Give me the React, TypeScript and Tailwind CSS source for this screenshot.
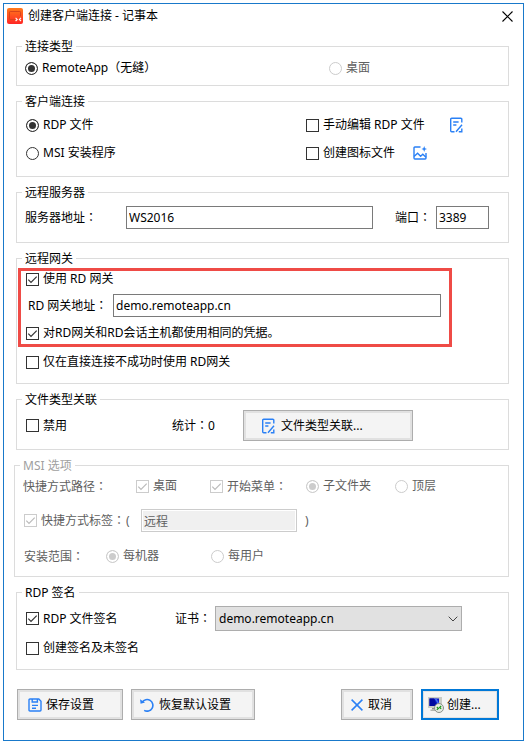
import React from 'react';

const Colon = () => (
  <span className="font-['Noto_Sans_CJK_JP',sans-serif]">：</span>
);

const Group = ({
  title,
  className = '',
  muted = false,
  children
}: {
  title: string;
  className?: string;
  muted?: boolean;
  children: React.ReactNode;
}) => (
  <fieldset className={`min-w-0 border border-[#dcdcdc] ${className}`}>
    <legend className={`ml-[5px] h-[17px] px-[3px] leading-[17px] ${muted ? 'text-[#a0a0a0]' : ''}`}>{title}</legend>
    {children}
  </fieldset>
);

type ToggleProps = {
  label: React.ReactNode;
  name?: string;
  checked?: boolean;
  disabled?: boolean;
  className?: string;
};

const Radio = ({ label, name, checked, disabled, className = '' }: ToggleProps) => (
  <label className={`flex shrink-0 items-center gap-1 ${disabled ? 'text-[#606060]' : ''} ${className}`}>
    <input
      type="radio"
      name={name}
      defaultChecked={checked}
      disabled={disabled}
      className="size-[13px] shrink-0 appearance-none rounded-full border border-[#333] bg-white shadow-[inset_0_0_0_2px_white] checked:bg-[#333] disabled:border-[#ccc] disabled:checked:bg-[#ccc]"
    />
    <span>{label}</span>
  </label>
);

const Check = ({ label, checked, disabled, className = '' }: ToggleProps) => (
  <label className={`flex shrink-0 items-center gap-1 ${disabled ? 'text-[#606060]' : ''} ${className}`}>
    <span className="relative size-[13px] shrink-0">
      <input
        type="checkbox"
        defaultChecked={checked}
        disabled={disabled}
        className="peer block size-[13px] appearance-none border border-[#333] bg-white disabled:border-[#ccc]"
      />
      <svg
        viewBox="0 0 13 13"
        className={`pointer-events-none absolute inset-0 hidden size-[13px] peer-checked:block ${disabled ? 'text-[#bbb]' : 'text-[#333]'}`}
        fill="none"
        stroke="currentColor"
        strokeWidth="1.2"
      >
        <path d="M2.3 6.6 5 9.3 10.7 3.6" />
      </svg>
    </span>
    <span>{label}</span>
  </label>
);

const EditIcon = () => (
  <svg viewBox="0 0 14 16" className="h-4 w-3.5 shrink-0" fill="none" stroke="#2a80f5" strokeWidth="1.4">
    <path d="M11.8 5.5V2.2Q11.8 1.2 10.8 1.2H1.7Q.7 1.2 .7 2.2V13.8Q.7 14.8 1.7 14.8H4.5" />
    <path d="M3.2 5H8.6M3.2 8H6.4" />
    <path d="M12 7.8 6 14.8M8.8 14.8H11.8V11.6" />
  </svg>
);

const PictureIcon = () => (
  <svg viewBox="0 0 14 14" className="size-3.5 shrink-0" fill="none" stroke="#2a80f5" strokeWidth="1.4">
    <path d="M7.5 1H1.9Q1 1 1 1.9V12.1Q1 13 1.9 13H12.1Q13 13 13 12.1V7" />
    <path d="M1 10.6 4.6 7.2 7.6 10.2 9.8 8.2 13 11.2" />
    <path d="M11.2 0 12 2.2 14 3 12 3.8 11.2 6 10.4 3.8 8.4 3 10.4 2.2Z" fill="#2a80f5" stroke="none" />
  </svg>
);

const SaveIcon = () => (
  <svg viewBox="0 0 14 14" className="size-3.5 shrink-0" fill="none" stroke="#2a80f5" strokeWidth="1.4">
    <path d="M2 1H10.8L13 3.2V12Q13 13 12 13H2Q1 13 1 12V2Q1 1 2 1Z" />
    <path d="M4.2 1V4H9.4V1M4 7.4H10M4 10.2H8" />
  </svg>
);

const UndoIcon = () => (
  <svg viewBox="0 0 14 14" className="size-3.5 shrink-0" fill="none" stroke="#2a80f5" strokeWidth="1.6">
    <path d="M2.2 4.2A5.8 5.8 0 1 1 4.2 12.4" />
    <path d="M0 1.2 0.6 5.8 5 4.6Z" fill="#2a80f5" stroke="none" />
  </svg>
);

const CancelIcon = () => (
  <svg viewBox="0 0 12 12" className="size-3 shrink-0" fill="none" stroke="#2a80f5" strokeWidth="1.5">
    <path d="M.6.6 11.4 11.4M11.4.6.6 11.4" />
  </svg>
);

const RemoteIcon = () => (
  <svg viewBox="0 0 16 16" className="size-4 shrink-0">
    <path d="M0 0H14V11H0Z" fill="#c9ccc4" />
    <path d="M1.5 1.5H11V9H1.5Z" fill="#0a18c8" />
    <path d="M1.5 1.5H6L9 9H1.5Z" fill="#0008a0" />
    <path d="M6.5 1.5H8.5L11 6V9Z" fill="#3f6cf0" />
    <path d="M4 11H8V12.5H4Z" fill="#8d8f8a" />
    <path d="M2.5 12.5H9V14H2.5Z" fill="#b4b6b0" />
    <circle cx="11" cy="11" r="4.5" fill="#e6eae4" stroke="#8a8f88" />
    <path d="M8.8 10 10.4 11.4 8.8 12.8M13.2 9 11.6 10.4 13.2 11.8" fill="none" stroke="#1a9a1a" strokeWidth="1.2" />
  </svg>
);

const AppIcon = () => (
  <svg viewBox="0 0 16 16" className="size-4 shrink-0">
    <defs>
      <linearGradient id="appIconFill" x1="0" y1="0" x2="0" y2="1">
        <stop offset="0" stopColor="#ff7a1a" />
        <stop offset="1" stopColor="#ff2626" />
      </linearGradient>
    </defs>
    <rect width="16" height="16" rx="2" fill="url(#appIconFill)" />
    <path d="M8 11.5H3.2Q2.5 11.5 2.5 10.8V4.2Q2.5 3.5 3.2 3.5H12.8Q13.5 3.5 13.5 4.2V8" fill="none" stroke="#d8441c" />
    <path d="M8.6 9.8 10.2 11.4 8.6 13M14 9.8 12.4 11.4 14 13" fill="none" stroke="#fff" strokeWidth="1.1" />
  </svg>
);

const Button = ({ className = '', children }: { className?: string; children: React.ReactNode }) => (
  <button
    type="button"
    className={`flex h-[31px] shrink-0 items-center border border-[#adadad] bg-[#f4f4f4] text-left shadow-[inset_0_0_0_2px_#e1e1e1] ${className}`}
  >
    {children}
  </button>
);

const inputStyle = 'h-[23px] min-w-0 border border-[#7a7a7a] bg-white px-[2px]';

export default function App() {
  return (
    <div className="bg-white pt-[3px] pr-px pb-[2px] pl-[3px] font-['Noto_Sans','Noto_Sans_CJK_SC',sans-serif] text-xs leading-4 whitespace-nowrap text-black">
      <form className="border border-[#1979ca] pb-5">
        <header className="mb-2.5 flex h-6 items-center pr-[10px] pl-[3px]">
          <AppIcon />
          <h1 className="ml-[5px] flex-1">创建客户端连接 - 记事本</h1>
          <button type="button" aria-label="关闭">
            <svg viewBox="0 0 11 11" className="size-[11px]" fill="none" stroke="#000" strokeWidth="1.1">
              <path d="M.5.5 10.5 10.5M10.5.5.5 10.5" />
            </svg>
          </button>
        </header>

        <div className="flex flex-col gap-[7px] pr-[14px] pl-3">
          <Group title="连接类型" className="pb-1">
            <div className="flex h-[26px] items-center pl-2">
              <Radio name="type" checked label="RemoteApp（无缝）" className="w-[304px]" />
              <Radio name="type" disabled label="桌面" />
            </div>
          </Group>

          <Group title="客户端连接" className="pt-px pb-[9px]">
            <div className="flex h-7 items-center pl-[9px]">
              <Radio name="client" checked label="RDP 文件" className="w-[280px]" />
              <Check label="手动编辑 RDP 文件" className="w-36" />
              <button type="button" aria-label="编辑">
                <EditIcon />
              </button>
            </div>
            <div className="flex h-7 items-center pl-[9px]">
              <Radio name="client" label="MSI 安装程序" className="w-[280px]" />
              <Check label="创建图标文件" className="w-[107px]" />
              <button type="button" aria-label="选择图标">
                <PictureIcon />
              </button>
            </div>
          </Group>

          <Group title="远程服务器" className="pb-[13px]">
            <div className="flex items-center pt-[5px] pr-[19px] pl-2">
              <label htmlFor="server" className="w-[101px] shrink-0">
                服务器地址<Colon />
              </label>
              <input id="server" defaultValue="WS2016" className={`flex-1 ${inputStyle}`} />
              <label htmlFor="port" className="ml-[22px] w-[41px] shrink-0">
                端口<Colon />
              </label>
              <input id="port" defaultValue="3389" className={`w-[53px] ${inputStyle}`} />
            </div>
          </Group>

          <Group title="远程网关" className="pb-[13px]">
            <div className="mt-px mr-14 ml-px border-3 border-[#ef4b46] pr-2 pb-[2px] pl-[5px]">
              <Check checked label="使用 RD 网关" className="h-4" />
              <div className="my-[7px] flex items-center pl-[2px]">
                <label htmlFor="gateway" className="w-[85px] shrink-0">
                  RD 网关地址<Colon />
                </label>
                <input id="gateway" defaultValue="demo.remoteapp.cn" className={`flex-1 ${inputStyle}`} />
              </div>
              <Check checked label="对RD网关和RD会话主机都使用相同的凭据。" className="h-[18px]" />
            </div>
            <Check label="仅在直接连接不成功时使用 RD网关" className="mt-[7px] h-4 pl-[9px]" />
          </Group>

          <Group title="文件类型关联" className="pb-2">
            <div className="flex items-center pt-[2px] pl-[9px]">
              <Check label="禁用" className="w-[146px]" />
              <span className="w-[71px]">
                统计<Colon />0
              </span>
              <Button className="w-[170px] gap-[5px] pl-[18px]">
                <EditIcon />
                文件类型关联...
              </Button>
            </div>
          </Group>

          <Group title="MSI 选项" muted className="-ml-[2px] pb-[10px] text-[#606060]">
            <div className="flex h-6 items-center pl-2">
              <span className="w-[113px]">
                快捷方式路径<Colon />
              </span>
              <Check checked disabled label="桌面" className="w-[74px]" />
              <Check checked disabled label={<>开始菜单<Colon /></>} className="w-24" />
              <Radio name="folder" checked disabled label="子文件夹" className="w-[89px]" />
              <Radio name="folder" disabled label="顶层" />
            </div>
            <div className="mt-[11px] flex items-center pl-[9px]">
              <Check checked disabled label={<>快捷方式标签<Colon /></>} className="w-[102px]" />
              <span className="w-[15px]">(</span>
              <input
                disabled
                aria-label="快捷方式标签"
                defaultValue="远程"
                className="h-[23px] w-[156px] border border-[#ccc] bg-[#f0f0f0] px-[2px] shadow-[inset_0_0_0_1px_white]"
              />
              <span className="ml-2">)</span>
            </div>
            <div className="mt-[14px] flex h-5 items-center pl-[9px]">
              <span className="w-[82px]">
                安装范围<Colon />
              </span>
              <Radio name="scope" checked disabled label="每机器" className="w-[105px]" />
              <Radio name="scope" disabled label="每用户" />
            </div>
          </Group>

          <Group title="RDP 签名" className="pb-[13px]">
            <div className="flex items-center pt-[5px] pl-[9px]">
              <Check checked label="RDP 文件签名" className="w-[149px]" />
              <label htmlFor="cert" className="w-10">
                证书<Colon />
              </label>
              <div className="relative w-[247px]">
                <select
                  id="cert"
                  className="block h-[25px] w-full appearance-none border border-[#adadad] bg-[#e1e1e1] pl-[3px]"
                >
                  <option>demo.remoteapp.cn</option>
                </select>
                <svg
                  viewBox="0 0 10 6"
                  className="pointer-events-none absolute top-[10px] right-[4px] h-[6px] w-[10px]"
                  fill="none"
                  stroke="#444"
                >
                  <path d="M.7.7 5 5 9.3.7" />
                </svg>
              </div>
            </div>
            <Check label="创建签名及未签名" className="mt-[9px] h-4 pl-[9px]" />
          </Group>
        </div>

        <footer className="mt-[19px] flex pr-6 pl-[13px]">
          <Button className="w-[106px] gap-1 pl-[10px]">
            <SaveIcon />
            保存设置
          </Button>
          <Button className="ml-2 w-[124px] gap-[5px] pl-2">
            <UndoIcon />
            恢复默认设置
          </Button>
          <Button className="ml-auto w-[72px] gap-[5px] pl-[9px]">
            <CancelIcon />
            取消
          </Button>
          <button
            type="submit"
            className="ml-2 flex h-[31px] w-[78px] shrink-0 items-center gap-[3px] border-2 border-[#0078d7] bg-[#f4f4f4] pl-[5px] shadow-[inset_0_0_0_1px_#e1e1e1]"
          >
            <RemoteIcon />
            创建...
          </button>
        </footer>
      </form>
    </div>
  );
}
